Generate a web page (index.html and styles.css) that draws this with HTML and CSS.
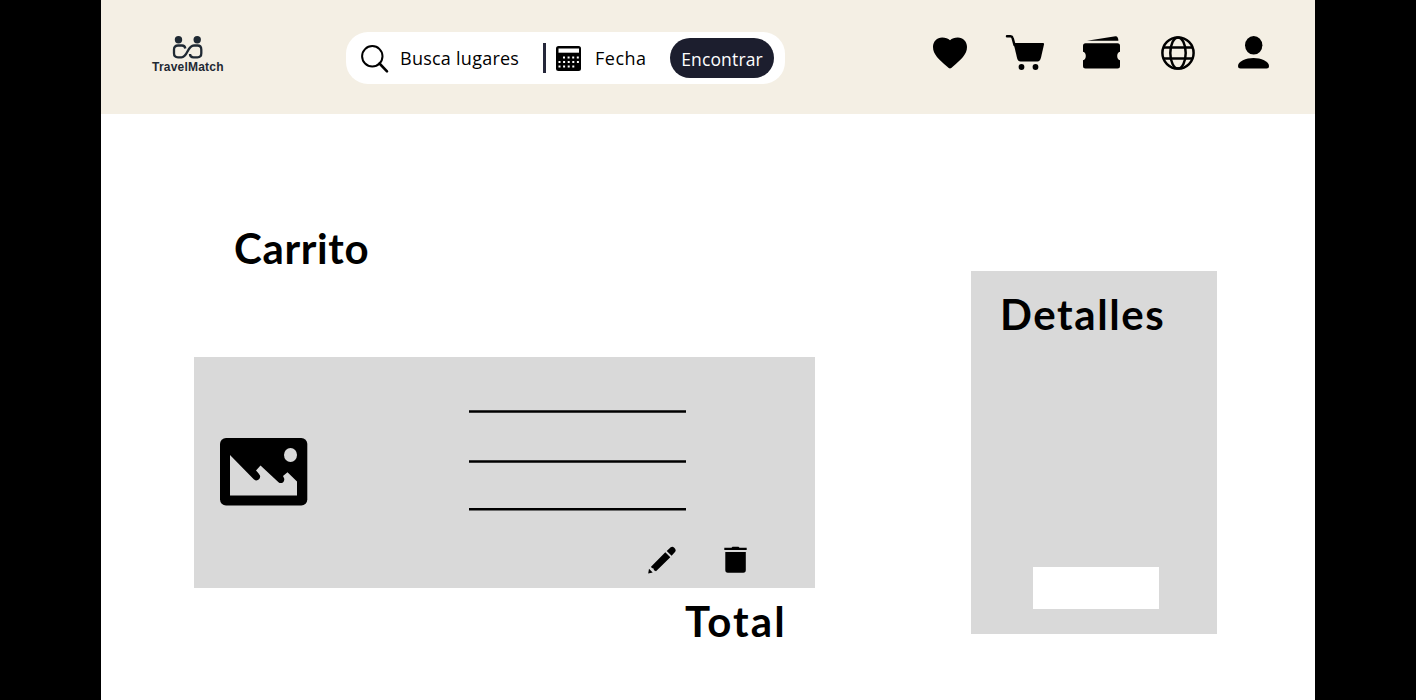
FILE: index.html
```html
<!DOCTYPE html>
<html lang="es">
<head>
<meta charset="utf-8">
<title>TravelMatch</title>
<link rel="stylesheet" href="styles.css">
</head>
<body>
<div class="page">
  <header class="header">
    <div class="logo">
      <svg class="logo-mark" viewBox="0 0 32 23" width="32" height="23">
        <g fill="#1f2933"><circle cx="6.500" cy="3.700" r="3.700"/><circle cx="25.200" cy="3.700" r="3.700"/></g>
        <path d="M13.300 12.500C13 10.200 12 9.500 10 9.500H6Q2 9.500 2 13.500V17.300Q2 21.300 6 21.300H9.500C16 21.300 15 9.500 22 9.500H25.500Q29.300 9.500 29.300 13.500V17.300Q29.300 21.300 25.500 21.300H21.500Q18 21.300 18 18" fill="none" stroke="#1f2933" stroke-width="2.300"/>
      </svg>
      <span class="logo-name">TravelMatch</span>
    </div>
    <div class="search">
      <svg class="lens" viewBox="0 0 28 29" width="28" height="29" fill="none" stroke="#000"><circle cx="11.300" cy="11.300" r="10.200" stroke-width="2"/><path d="M18.500 18.500L26 26.300" stroke-width="2.600" stroke-linecap="round"/></svg>
      <span class="search-place">Busca lugares</span>
      <span class="divider"></span>
      <svg class="calendar" viewBox="0 0 25 25" width="25" height="25"><rect width="25" height="25" rx="2.500"/><path d="M2.500 2.500h20.500v4.200h-20.500z" fill="#fff"/><g stroke="#fff" stroke-width="2" stroke-dasharray="2 2.600"><path d="M7 11.500h16M2.500 16h20.500M2.500 20.500h15.800"/></g></svg>
      <span class="search-date">Fecha</span>
      <button class="find">Encontrar</button>
    </div>
    <nav class="icons">
      <svg viewBox="0 0 34 32" width="34" height="32"><path d="M17 31.500Q16 31.500 14 29.500C6 22.500 0 17.500 0 10C0 4.500 4 .5 9.200 .5C12.500 .5 15 1.500 17 3.200C19 1.500 21.500 .5 24.800 .5C30 .5 34 4.500 34 10C34 17.500 28 22.500 20 29.500Q18 31.500 17 31.500Z"/></svg>
      <svg class="cart" viewBox="0 0 38 35" width="38" height="35"><path d="M1 1.300H4.500Q6.200 1.300 6.600 3L8.500 10" fill="none" stroke="#000" stroke-width="2.500" stroke-linecap="round"/><path d="M7.500 8H37Q38.300 8 38 9.500L35 22.500Q34 26.500 31.500 26.500H14.500Q12 26.500 11.200 23.500Z"/><circle cx="15.500" cy="32" r="2.900"/><circle cx="29.500" cy="32" r="2.900"/></svg>
      <svg class="ticket" viewBox="0 0 37 33" width="37" height="33"><path d="M4 4.700L32.500 .2Q35.200 0 35.400 4.700Z"/><path d="M2.500 7.200H34.500Q37 7.200 37 9.700V15.800Q34.200 16.500 34.200 20Q34.200 23.500 37 24.200V30Q37 32.500 34.500 32.500H2.500Q0 32.500 0 30V24.200Q2.800 23.500 2.800 20Q2.800 16.500 0 15.800V9.700Q0 7.200 2.500 7.200Z"/></svg>
      <svg class="globe" viewBox="0 0 34 34" width="34" height="34" fill="none" stroke="#000" stroke-width="2.500"><circle cx="17" cy="17" r="15.600"/><ellipse cx="17" cy="17" rx="7.700" ry="15.600"/><path d="M2.500 11.500H31.500M2.500 22.500H31.500"/></svg>
      <svg class="user" viewBox="0 0 31 33" width="31" height="33"><ellipse cx="15.700" cy="9.300" rx="8.700" ry="9.300"/><path d="M15.500 22C23 22 31 25.500 31 30Q31 32.500 28.500 32.500H2.500Q0 32.500 0 30C0 25.500 8 22 15.500 22Z"/></svg>
    </nav>
  </header>
  <main class="content">
    <section class="cart-column">
      <h1 class="title">Carrito</h1>
      <article class="item">
        <svg class="photo" viewBox="0 0 88 68" width="88" height="68"><rect width="87.300" height="67.500" rx="6"/><g fill="#d9d9d9"><path d="M10 17L34 41.500C37 44 41 41 40 37.500Q39 35.500 36 32.500L40.500 27.500L58.500 44.200C61 46.500 65 44 64.200 40.500L63 38L67.500 34.200L77 43.500V57.500H10Z"/><ellipse cx="70.500" cy="17" rx="6.500" ry="7"/></g></svg>
        <svg class="lines" viewBox="0 0 217 102" width="217" height="102" stroke="#000" stroke-width="2.500"><path d="M0 1.500H217M0 51.500H217M0 99.300H217"/></svg>
        <div class="actions">
          <svg class="pencil" viewBox="0 0 28 28" width="28" height="28"><path d="M.2 27.500L1 22.800L4.700 26.500ZM3 20.700L17.300 6.200L22.300 11.200L8 25.200L6 24.200L5.500 22.500L3.800 22ZM18.700 5L22.700 1.200Q24.500 0 26 1.500Q28.800 4.300 27 6L23.600 9.800Z"/></svg>
          <svg class="trash" viewBox="0 0 23 27" width="23" height="27"><path d="M.3 .7H7.500L8.500 -.2H14.500L15.500 .7H22.700V3H.3ZM1.300 4.900H21.800V23Q21.800 25.700 19.300 25.700H3.800Q1.300 25.700 1.300 23Z"/></svg>
        </div>
      </article>
      <p class="title total">Total</p>
    </section>
    <aside class="details">
      <h2 class="title">Detalles</h2>
      <div class="action-box"></div>
    </aside>
  </main>
</div>
</body>
</html>
```
FILE: styles.css
```css
* { box-sizing: border-box; }
body { margin: 0; background: #000; }
svg { display: block; flex: none; overflow: visible; }
.page { width: 1214px; height: 700px; margin: 0 auto; background: #fff; overflow: hidden; color: #000; }
.header { display: flex; align-items: flex-start; height: 114px; padding-left: 51px; background: #f4efe4; }
.logo { width: 72px; margin-top: 36px; }
.logo-mark { margin-left: 20px; }
.logo-name { display: block; font: bold 12px/16px "Liberation Sans", Arial, sans-serif; color: #1f2933; letter-spacing: .22px; white-space: nowrap; }
.search { display: flex; align-items: center; width: 439px; height: 52px; margin: 32px 0 0 122px; padding-left: 15px; background: #fff; border-radius: 22px; font: 18px/27px "Open Sans", sans-serif; letter-spacing: .25px; white-space: nowrap; }
.lens { margin-top: 2px; }
.search-place { width: 131px; margin: 1px 12px 0 11px; }
.divider { width: 2.500px; height: 30px; background: #25273a; }
.calendar { margin: 1px 0 0 10.500px; }
.search-date { width: 63px; margin: 1px 0 0 14px; letter-spacing: .5px; }
.find { width: 104px; height: 40px; margin-left: 12px; padding: 1px 0 0; border: 0; border-radius: 20px; background: #1c1e2e; color: #fff; font: 17.500px/26px "Open Sans", sans-serif; letter-spacing: .15px; }
.icons { display: flex; align-items: flex-start; margin: 35px 0 0 148px; padding-top: 1px; }
.icons > :first-child { margin-top: 1px; }
.cart { margin: -1px 0 0 39px; }
.ticket { margin-left: 39px; }
.globe { margin-left: 41px; }
.user { margin-left: 43px; }
.content { display: flex; align-items: flex-start; }
.cart-column { width: 621px; margin-left: 93px; padding-top: 106px; }
.title { margin: 0; font: bold 42px/56px Lato, sans-serif; letter-spacing: .65px; white-space: nowrap; }
.cart-column h1 { margin-left: 40px; }
.item { display: grid; grid-template: 189px 42px / 275px 1fr; height: 231px; margin-top: 81px; background: #d9d9d9; }
.photo { margin: 81px 0 0 26px; }
.lines { margin-top: 53px; }
.actions { display: flex; grid-column: 2; padding-left: 179px; }
.trash { margin: 1px 0 0 48px; }
.total { margin: 5px 0 0 491px; letter-spacing: 2.100px; }
.details { display: flex; flex-direction: column; justify-content: space-between; width: 246px; height: 363px; margin: 157px 0 0 156px; padding: 15px 0 25px 29px; background: #d9d9d9; }
.details .title { letter-spacing: 1.600px; }
.action-box { width: 126px; height: 42px; margin-left: 33px; background: #fff; }
```
